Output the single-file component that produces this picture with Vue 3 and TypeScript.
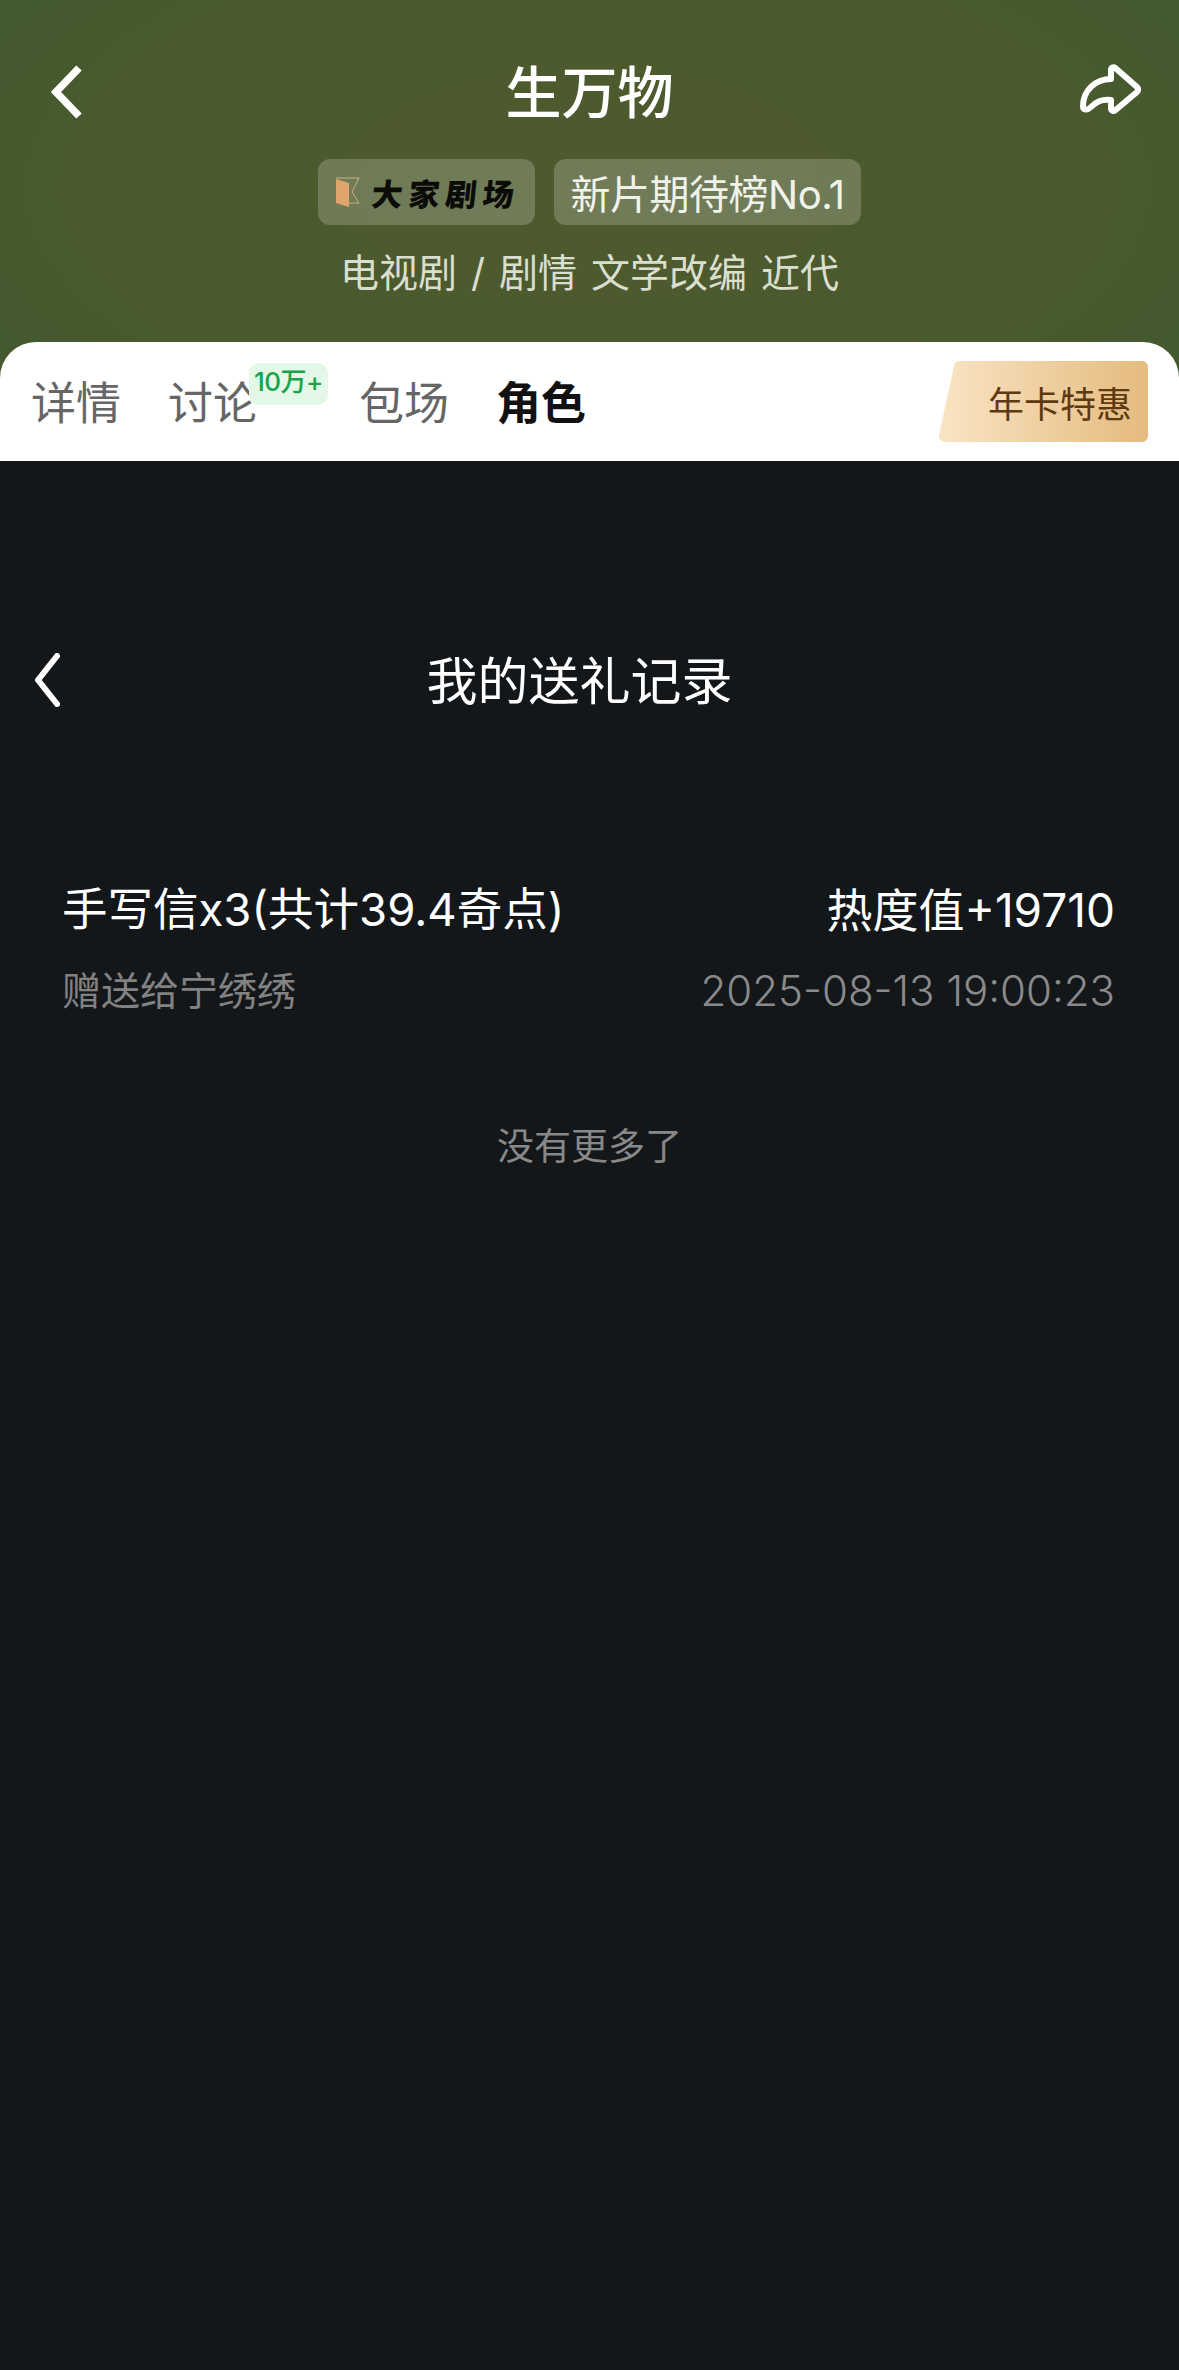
<script setup lang="ts">
const tags = ['电视剧', '/', '剧情', '文学改编', '近代']
</script>

<template>
  <div class="page">
    <div class="hero">
      <header class="head">
        <div class="nav">
          <svg class="nav-back" viewBox="0 0 32 56" fill="none">
            <path d="M28 4 5 28l23 24" stroke="#fff" stroke-width="7.500" stroke-linejoin="miter" />
          </svg>
          <h1 class="name">生万物</h1>
          <svg class="nav-share" viewBox="0 0 62 50" fill="none">
            <path
              d="M31 6c0-2.500 2.500-3.500 4-2.200L57 23c1.500 1.300 1.500 3.700 0 5L35 46.500c-1.500 1.300-4 .3-4-2.200V36C21 35 16 38 11 43 7 47 3 46 3 42 3 27 15 15 31 15Z"
              stroke="#fff"
              stroke-width="6"
              stroke-linejoin="round"
            />
          </svg>
        </div>
        <div class="badges">
          <div class="badge badge-logo">
            <svg class="book" viewBox="0 0 25 30" fill="none">
              <path d="M1 2 14 6v24L1 26Z" fill="#dfa56b" />
              <path d="M1 1h23l-7 14 7 11H14" stroke="#c9b27f" stroke-width="1" />
            </svg>
            <span class="logo-text">大家剧场</span>
          </div>
          <div class="badge">新片期待榜No.1</div>
        </div>
        <div class="genres">
          <span v-for="t in tags" :key="t">{{ t }}</span>
        </div>
      </header>

      <nav class="tabs">
        <span class="tab">详情</span>
        <span class="tab tab-count">讨论<em class="count">10万+</em></span>
        <span class="tab">包场</span>
        <span class="tab active">角色</span>
        <div class="promo">年卡特惠</div>
      </nav>
    </div>

    <main class="content">
      <div class="bar">
        <svg class="bar-back" viewBox="0 0 26 54" fill="none">
          <path d="M23 3 4 27l19 24" stroke="#fff" stroke-width="6" stroke-linecap="round" stroke-linejoin="round" />
        </svg>
        <h2 class="bar-title">我的送礼记录</h2>
      </div>

      <div class="record">
        <div class="line">
          <span>手写信x3(共计39.4奇点)</span>
          <span class="heat">热度值+19710</span>
        </div>
        <div class="line sub">
          <span>赠送给宁绣绣</span>
          <span class="date">2025-08-13 19:00:23</span>
        </div>
      </div>

      <p class="end">没有更多了</p>
    </main>
  </div>
</template>

<style>
html,
body {
  margin: 0;
  background: #13171a;
}
</style>

<style scoped>
.page {
  width: 1179px;
  height: 2370px;
  background: #13171a;
  font-family: Inter, "Noto Sans CJK SC", sans-serif;
  overflow: hidden;
}

.hero {
  background: radial-gradient(ellipse at 50% 40%, #4e5a2e 0%, #4a5a2e 55%, #3f5a2f 100%);
}

.head {
  height: 342px;
  box-sizing: border-box;
  padding-top: 61px;
}

.nav {
  position: relative;
  height: 64px;
  display: flex;
  align-items: center;
  justify-content: center;
}

.nav-back {
  position: absolute;
  left: 51px;
  top: 3px;
  width: 32px;
  height: 56px;
}

.nav-share {
  position: absolute;
  left: 1080px;
  top: 3px;
  width: 62px;
  height: 50px;
}

.name {
  margin: 0;
  font-size: 56px;
  font-weight: 500;
  line-height: 64px;
  color: #fff;
}

.badges {
  margin-top: 34px;
  display: flex;
  justify-content: center;
  gap: 19px;
}

.badge {
  height: 66px;
  padding: 0 17px;
  display: flex;
  align-items: center;
  border-radius: 12px;
  background: rgba(255, 255, 255, 0.2);
  color: #f1f3ea;
  font-size: 40px;
  letter-spacing: -0.5px;
}

.badge-logo {
  gap: 12px;
  padding-right: 15px;
}

.book {
  width: 25px;
  height: 30px;
}

.logo-text {
  color: #0b0b08;
  font-size: 31px;
  font-weight: 900;
  letter-spacing: 6px;
  transform: skewX(-6deg);
}

.genres {
  margin-top: 23px;
  display: flex;
  justify-content: center;
  gap: 14px;
  color: #d9decf;
  font-size: 39px;
  line-height: 50px;
}

.tabs {
  position: relative;
  height: 119px;
  box-sizing: border-box;
  padding: 32px 0 0 31px;
  display: flex;
  gap: 47px;
  background: #fff;
  border-radius: 36px 36px 0 0;
}

.tab {
  position: relative;
  font-size: 45px;
  line-height: 60px;
  color: #666;
}

.tab-count {
  padding-right: 54px;
}

.active {
  color: #111;
  font-weight: 700;
}

.count {
  position: absolute;
  left: 81px;
  top: -11px;
  width: 79px;
  height: 42px;
  border-radius: 10px;
  background: #e3f8e6;
  color: #17a44a;
  font-size: 26px;
  font-style: normal;
  font-weight: 500;
  letter-spacing: -0.5px;
  line-height: 38px;
  text-align: center;
}

.promo {
  position: absolute;
  left: 939px;
  top: 19px;
  width: 209px;
  height: 81px;
  box-sizing: border-box;
  padding-right: 16px;
  display: flex;
  align-items: center;
  justify-content: flex-end;
  background: linear-gradient(90deg, #f9e4c4, #e5bb7e);
  clip-path: path("M21 0H203a6 6 0 0 1 6 6V75a6 6 0 0 1-6 6H6a6 6 0 0 1-6-7L15 5a6 6 0 0 1 6-5Z");
  color: #5e3a12;
  font-size: 36px;
}

.content {
  padding-top: 189px;
  color: #fff;
}

.bar {
  height: 56px;
  padding: 0 20px 0 34px;
  display: flex;
  align-items: center;
}

.bar-back {
  position: relative;
  top: 2px;
  width: 26px;
  height: 54px;
  flex: none;
}

.bar-title {
  flex: 1;
  margin: 0;
  padding-right: 60px;
  text-align: center;
  font-size: 51px;
  font-weight: 400;
}

.record {
  margin-top: 174px;
  padding: 0 64px 0 62px;
}

.line {
  display: flex;
  justify-content: space-between;
  font-size: 45.500px;
  line-height: 60px;
}

.heat {
  font-size: 46px;
}

.sub {
  margin-top: 21px;
  font-size: 39px;
  line-height: 60px;
  color: #828282;
}

.date {
  font-size: 42px;
  font-weight: 300;
  color: #8a8a8a;
}

.end {
  margin: 96px 0 0;
  text-align: center;
  font-size: 37px;
  line-height: 60px;
  color: #888;
}
</style>
